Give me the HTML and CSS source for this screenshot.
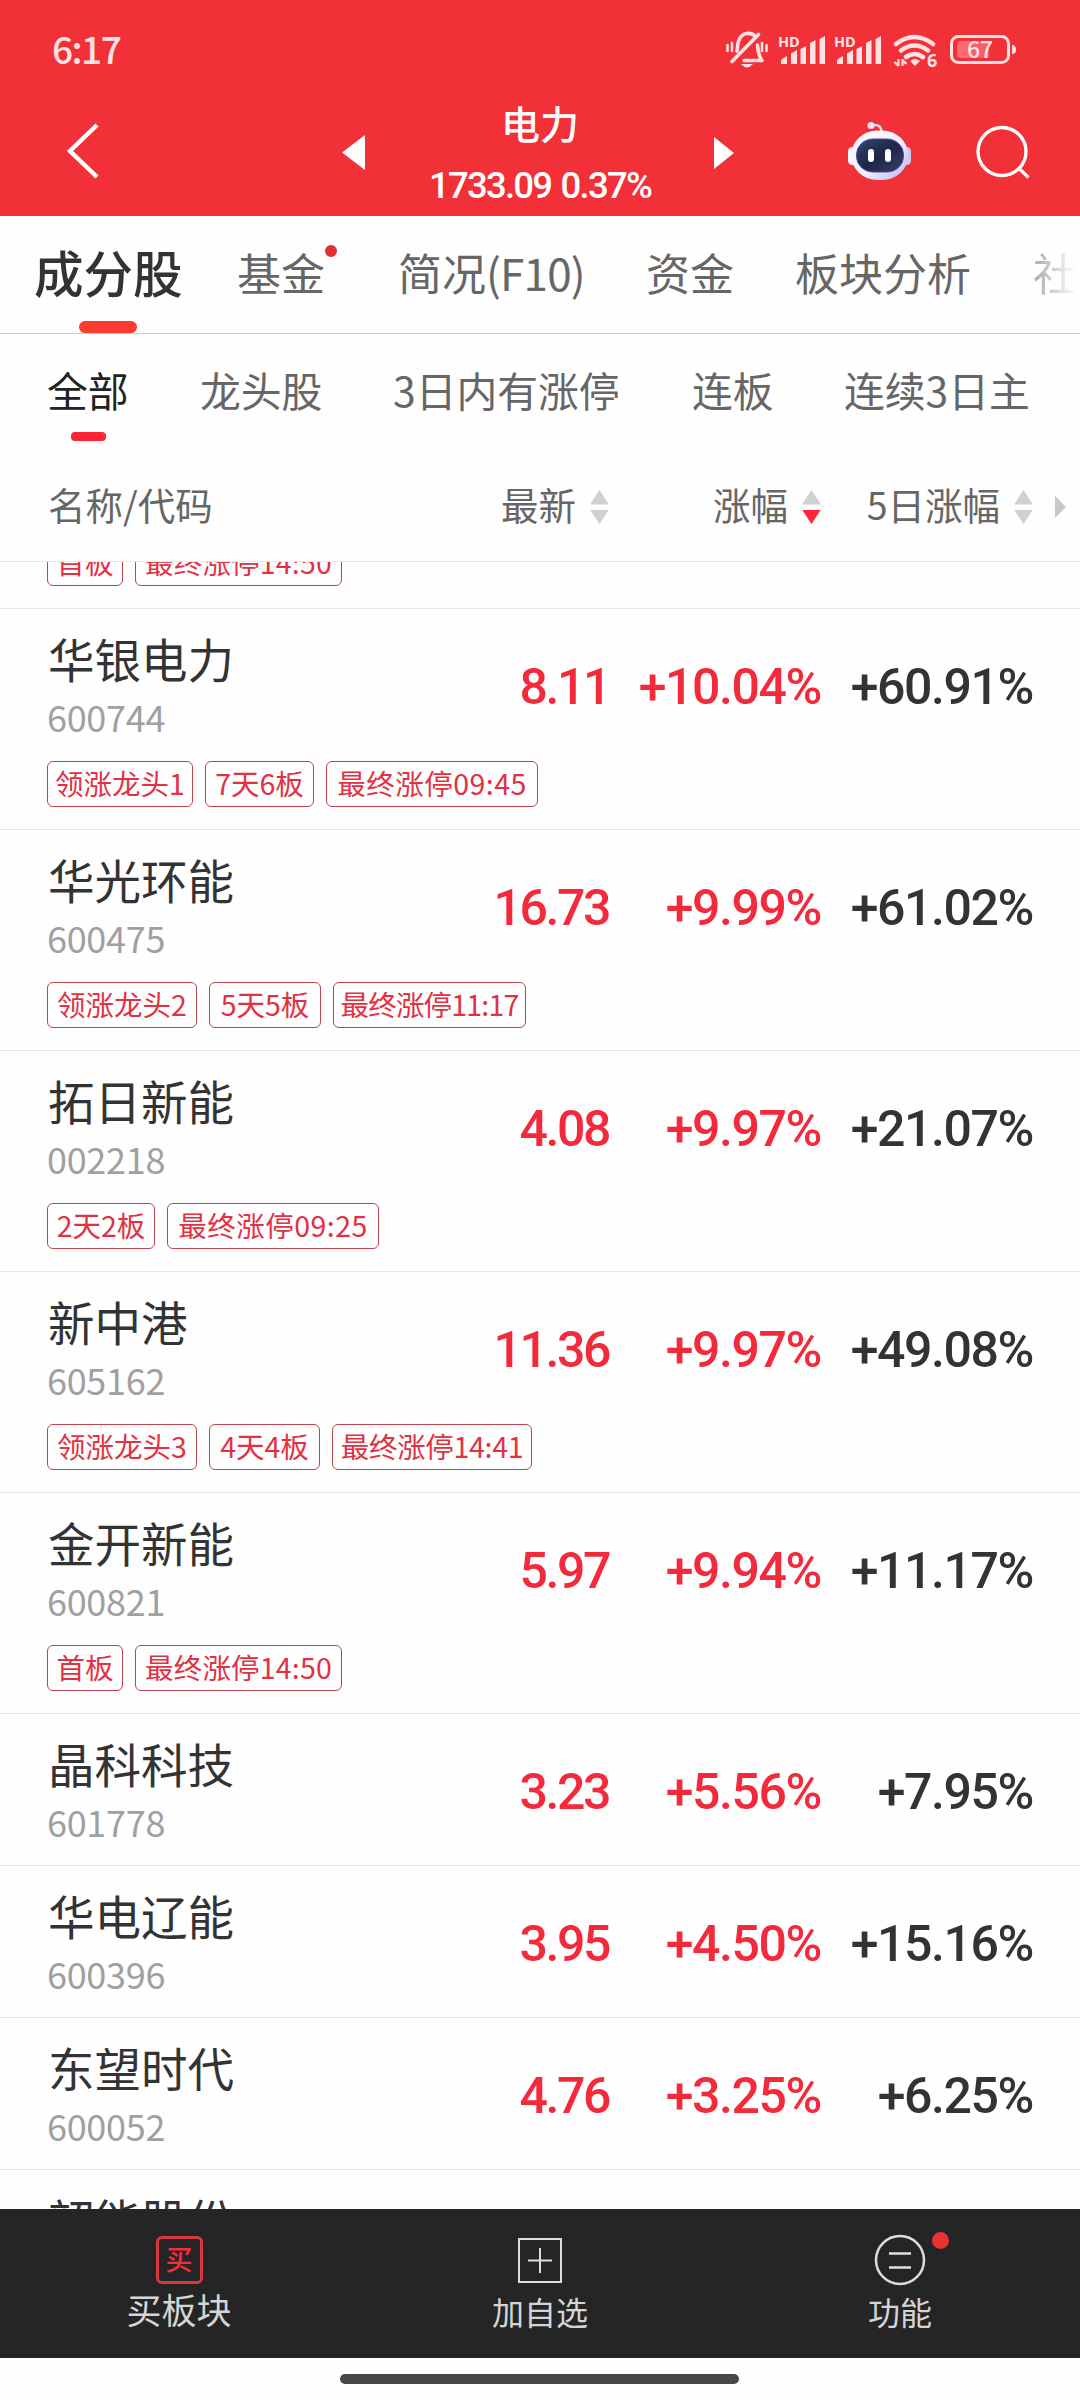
FILE: index.html
```html
<!DOCTYPE html>
<html lang="zh-CN">
<head>
<meta charset="utf-8">
<title>电力</title>
<link rel="stylesheet" href="styles.css">
</head>
<body>
<div class="screen">
  <header class="top">
    <div class="status">
      <span class="time">6:17</span>
      <svg class="status-icons" width="300" height="44" viewBox="720 28 300 44" fill="none" stroke="#ffe1e3">
        <g stroke-width="3.600" stroke-linecap="round" stroke-linejoin="round">
          <path d="M758.500 34.500 732 61.500M737 51C738 47 737 44 739 40 742 32 751 32 755 36M757.500 45C758 51 758 55 762 60.500H744" />
          <path d="M727.500 45v6M732 43v8M762 43v8M766.500 45v6" stroke-width="2.500"/>
        </g>
        <path d="M741 64h12q-6 7-12 0z" fill="#ffe1e3" stroke="none"/>
        <g id="sig" fill="#ffe1e3" stroke="none">
          <path d="M781 64v-3q0-1 1-2l5-3v8zM791 64V54q0-1 1-1l5-3v14zM800.500 64V49l5.500-3v18zM810 64V43l5.500-3v24zM819.500 64V39l5.500-3v28z"/>
          <text x="778" y="46.500" class="hd">HD</text>
        </g>
        <use href="#sig" x="56"/>
        <g stroke-width="4.600" stroke-linecap="round"><path d="M896 44q18.500-14 37 0M901 50.500q13.500-10 27 0M906 57q8.500-6 17 0"/></g>
        <path d="M910 61q5-4 10 0l-5 5z" fill="#ffe1e3" stroke="none"/>
        <path d="M898.500 66V59M902.500 59v7M894.500 62 898.500 66M902.500 60l4 4" stroke-width="2.200"/>
        <text x="927" y="67" class="six">6</text>
        <rect x="951.500" y="36.500" width="57" height="26" rx="7" stroke-width="3"/>
        <path d="M957 45q0-4 4-4h10v17h-10q-4 0-4-4z" fill="#ff696f" stroke="none"/>
        <rect x="971" y="41" width="18" height="17" fill="#f65f66" stroke="none"/>
        <path d="M1012 45q4 0 4 4.500t-4 4.500z" fill="#ffe1e3" stroke="none"/>
        <text x="980" y="58" text-anchor="middle" class="bat">67</text>
      </svg>
    </div>
    <div class="nav">
      <svg class="back" width="34" height="60" viewBox="66 121 34 60" fill="none" stroke="#fff" stroke-width="4.500"><path d="M97 125 70 151l27 26"/></svg>
      <svg class="tri" width="24" height="36" viewBox="0 0 24 36"><path d="M23 0v35L0 17.500z" fill="#fff"/></svg>
      <div class="heading">
        <h1>电力</h1>
        <p>1733.09 0.37%</p>
      </div>
      <svg class="tri right" width="24" height="36" viewBox="0 0 24 36"><path d="M2 2v32L22 18z" fill="#fff"/></svg>
      <svg class="robot" width="64" height="60" viewBox="848 121 64 60">
        <defs><linearGradient id="shell" x1="0" y1="0" x2="1" y2="1"><stop offset="0" stop-color="#fff"/><stop offset=".55" stop-color="#f1effc"/><stop offset="1" stop-color="#b9b3ea"/></linearGradient>
        <linearGradient id="face" x1="0" y1="0" x2="1" y2="1"><stop offset="0" stop-color="#33476f"/><stop offset=".5" stop-color="#1d2647"/><stop offset="1" stop-color="#3a3f62"/></linearGradient></defs>
        <circle cx="871" cy="125.500" r="3.600" fill="#ebe4f8"/>
        <path d="M872 125.500q9-2 9.500 6" fill="none" stroke="#e6dcf5" stroke-width="2.400"/>
        <rect x="848" y="147" width="9" height="18" rx="4.500" fill="#f6f4fd"/>
        <rect x="902.500" y="147" width="8.500" height="18" rx="4.200" fill="#cfc9f1"/>
        <rect x="851.500" y="130.500" width="56.500" height="49.500" rx="26" ry="24" fill="url(#shell)"/>
        <rect x="856.500" y="139" width="47" height="33" rx="17" ry="15.500" fill="url(#face)" stroke="#4a3fc4" stroke-width="1"/>
        <rect x="868" y="149" width="6" height="13" rx="3" fill="#fff"/>
        <rect x="885" y="149" width="6" height="13" rx="3" fill="#fff"/>
      </svg>
      <svg class="search" width="56" height="56" viewBox="974 125 56 56" fill="none" stroke="#fff" stroke-width="3.300"><circle cx="1001" cy="151.500" r="24"/><path d="M1018 168.500l9.500 9"/></svg>
    </div>
  </header>

  <nav class="tabs">
    <span class="tab active">成分股</span>
    <span class="tab dot">基金</span>
    <span class="tab">简况<span class="latin">(F10)</span></span>
    <span class="tab">资金</span>
    <span class="tab">板块分析</span>
    <span class="tab fade">社</span>
  </nav>
  <nav class="filters">
    <span class="filter active">全部</span>
    <span class="filter">龙头股</span>
    <span class="filter">3日内有涨停</span>
    <span class="filter">连板</span>
    <span class="filter">连续3日主</span>
  </nav>
  <div class="columns">
    <span class="col-name">名称/代码</span>
    <span class="col">最新<i class="sort"></i></span>
    <span class="col">涨幅<i class="sort desc"></i></span>
    <span class="col">5日涨幅<i class="sort"></i></span>
    <i class="more"></i>
  </div>

  <main class="list">
    <div class="cut"><div class="tags"><b class="tag first">首板</b><b class="tag time-tag">最终涨停14:50</b></div></div>

    <section class="row">
      <div class="main"><div><h2>华银电力</h2><p class="code">600744</p></div><span class="num up price">8.11</span><span class="num up">+10.04%</span><span class="num">+60.91%</span></div>
      <div class="tags"><b class="tag lead">领涨龙头1</b><b class="tag days">7天6板</b><b class="tag time-tag wide">最终涨停09:45</b></div>
    </section>
    <section class="row">
      <div class="main"><div><h2>华光环能</h2><p class="code">600475</p></div><span class="num up price">16.73</span><span class="num up">+9.99%</span><span class="num">+61.02%</span></div>
      <div class="tags"><b class="tag lead wide">领涨龙头2</b><b class="tag days wide">5天5板</b><b class="tag time-tag narrow">最终涨停11:17</b></div>
    </section>
    <section class="row">
      <div class="main"><div><h2>拓日新能</h2><p class="code">002218</p></div><span class="num up price">4.08</span><span class="num up">+9.97%</span><span class="num">+21.07%</span></div>
      <div class="tags"><b class="tag days slim">2天2板</b><b class="tag time-tag wide">最终涨停09:25</b></div>
    </section>
    <section class="row">
      <div class="main"><div><h2>新中港</h2><p class="code">605162</p></div><span class="num up price">11.36</span><span class="num up">+9.97%</span><span class="num">+49.08%</span></div>
      <div class="tags"><b class="tag lead wide">领涨龙头3</b><b class="tag days mid">4天4板</b><b class="tag time-tag mid">最终涨停14:41</b></div>
    </section>
    <section class="row">
      <div class="main"><div><h2>金开新能</h2><p class="code">600821</p></div><span class="num up price">5.97</span><span class="num up">+9.94%</span><span class="num">+11.17%</span></div>
      <div class="tags"><b class="tag first">首板</b><b class="tag time-tag">最终涨停14:50</b></div>
    </section>
    <section class="row">
      <div class="main"><div><h2>晶科科技</h2><p class="code">601778</p></div><span class="num up price">3.23</span><span class="num up">+5.56%</span><span class="num">+7.95%</span></div>
    </section>
    <section class="row">
      <div class="main"><div><h2>华电辽能</h2><p class="code">600396</p></div><span class="num up price">3.95</span><span class="num up">+4.50%</span><span class="num">+15.16%</span></div>
    </section>
    <section class="row">
      <div class="main"><div><h2>东望时代</h2><p class="code">600052</p></div><span class="num up price">4.76</span><span class="num up">+3.25%</span><span class="num">+6.25%</span></div>
    </section>
    <section class="row">
      <div class="main"><div><h2>韶能股份</h2></div></div>
    </section>
  </main>

  <footer class="bar">
    <div class="action buy"><span class="buy-icon">买</span><span>买板块</span></div>
    <div class="action">
      <svg width="52" height="52" viewBox="0 0 52 52" fill="none" stroke="#ddd" stroke-width="2"><path d="M5 5h42v43H5zM26 14v25M14 26.500h24"/></svg>
      <span>加自选</span>
    </div>
    <div class="action">
      <svg width="52" height="52" viewBox="0 0 52 52" fill="none" stroke="#ddd" stroke-width="2.500"><circle cx="26" cy="26" r="24"/><path d="M15 19.500h22M15 33.500h22"/></svg>
      <span>功能</span>
      <i class="badge"></i>
    </div>
  </footer>
  <div class="home"><i></i></div>
</div>
</body>
</html>
```
FILE: styles.css
```css
* { box-sizing: border-box; margin: 0; padding: 0; }
body { background: #fefefe; font-family: "Noto Sans CJK SC", sans-serif; color: #333; }
i { font-style: normal; }
.screen { width: 1080px; height: 2400px; overflow: hidden; display: flex; flex-direction: column; }
svg { display: block; overflow: visible; }

.top { height: 216px; background: #f23038; color: #fff; flex: none; }
.status { height: 100px; display: flex; justify-content: space-between; padding: 28px 60px 0 52px; }
.time { font-size: 37px; font-weight: 500; line-height: 40px; letter-spacing: -1.500px; color: #ffe1e3; }
.hd { font: 700 14.500px "Open Sans", sans-serif; }
.six { font: 700 18px "Open Sans", sans-serif; fill: #ffe1e3; stroke: none; }
.bat { font: 500 23px "Noto Sans CJK SC", sans-serif; fill: #ffe1e3; stroke: none; }
.nav { height: 116px; display: grid; grid-template-columns: 276px 80px 290px 136px 127px 56px; padding-left: 66px; }
.back { margin-top: 21px; }
.tri { margin-top: 35px; }
.heading { text-align: center; width: 360px; margin-left: -62px; }
.heading h1 { font-size: 39px; font-weight: 500; line-height: 44px; }
.heading p { font: 500 36.500px/40px Roboto, sans-serif; letter-spacing: -1.750px; word-spacing: 2px; margin-top: 22px; }
.robot { margin-top: 21px; }
.search { margin-top: 25px; }

.tabs { height: 118px; flex: none; border-bottom: 1px solid #c8c8c8; display: grid; grid-template-columns: 202px 161px 248px 149px 238px 48px; padding-left: 35px; line-height: 112px; font-size: 44px; color: #666; white-space: nowrap; }
.tab { position: relative; }
.tab.active { font-size: 49.500px; font-weight: 500; color: #333; margin-left: -1px; }
.tab.active::after { content: ""; position: absolute; left: 45px; top: 105px; width: 58px; height: 12px; border-radius: 6px; background: #fc3b30; }
.tab.dot::after { content: ""; position: absolute; left: 88px; top: 29px; width: 12px; height: 12px; border-radius: 50%; background: #e03030; }
.latin { letter-spacing: -.800px; }
.fade { background: linear-gradient(90deg, #aaa, #fefefe 44px); background-clip: text; color: transparent; }

.filters { height: 116px; flex: none; display: grid; grid-template-columns: 152px 193px 299px 152px 200px; padding-left: 48px; font-size: 40.800px; line-height: 112px; color: #666; white-space: nowrap; }
.filter { position: relative; }
.filter.active { color: #222; margin-left: -1px; }
.filter.active::after { content: ""; position: absolute; left: 24px; top: 98px; width: 35px; height: 9px; border-radius: 4px; background: #fc2538; }

.columns { height: 112px; flex: none; border-bottom: 1px solid #e8e8e8; display: grid; grid-template-columns: 300px 261px 212px 212px 47px; padding-left: 48px; font-size: 37.500px; line-height: 108px; color: #666; white-space: nowrap; }
.col { display: flex; justify-content: flex-end; gap: 14px; }
.sort { width: 19px; height: 34px; margin-top: 40px; display: grid; row-gap: 5px; }
.sort::before, .sort::after { content: ""; height: 14.500px; background: #d0d0d0; clip-path: polygon(50% 0, 100% 100%, 0 100%); }
.sort::after { clip-path: polygon(0 0, 100% 0, 50% 100%); }
.sort.desc::after { background: #fc2538; }
.more { width: 11px; height: 22px; margin: 46px 0 0 22px; background: #c8c8c8; clip-path: polygon(0 0, 100% 50%, 0 100%); }

.list { height: 1647px; flex: none; overflow: hidden; }
.cut { height: 47px; display: flex; align-items: flex-end; overflow: hidden; padding-bottom: 22px; border-bottom: 1px solid #e8e8e8; }
.row { border-bottom: 1px solid #e8e8e8; }
.main { height: 151px; display: grid; grid-template-columns: 300px 261px 212px 212px; padding-left: 48px; padding-top: 20px; }
.main h2 { font-size: 46.500px; font-weight: 400; line-height: 58px; white-space: nowrap; }
.code { font-size: 36px; line-height: 40px; margin: 9px 0 0 -1px; letter-spacing: -.300px; color: #a0a0a0; }
.num { font: 500 50px/60px Roboto, sans-serif; letter-spacing: -1.400px; text-align: right; margin-top: 28px; }
.price { letter-spacing: -2.400px; }
.up { color: #f22a3c; }
.tags { display: flex; gap: 12px; padding-left: 47px; }
.row .tags { padding-top: 1px; padding-bottom: 22px; }
.tag { height: 46px; border: 1px solid #b8454f; border-radius: 6px; color: #e23142; font-size: 28.500px; font-weight: 400; line-height: 41px; text-align: center; white-space: nowrap; }
.first { width: 76px; }
.lead { width: 146px; }
.lead.wide { width: 150px; }
.days { width: 109px; }
.days.slim { width: 108px; }
.days.mid { width: 111px; }
.days.wide { width: 112px; }
.time-tag { width: 207px; letter-spacing: .200px; }
.time-tag.wide { width: 212px; letter-spacing: .500px; }
.time-tag.mid { width: 200px; letter-spacing: -.300px; }
.time-tag.narrow { width: 193px; letter-spacing: -.800px; }

.bar { height: 149px; flex: none; background: #252525; color: #d5d5d5; display: grid; grid-template-columns: repeat(3, 1fr); }
.action { position: relative; display: flex; flex-direction: column; align-items: center; padding-top: 25px; font-size: 32px; line-height: 44px; }
.action span:last-of-type { margin-top: 3px; }
.buy { font-size: 35px; padding-right: 2px; }
.buy-icon { width: 47px; height: 48px; margin: 2px 0; border: 3px solid #d8383f; border-radius: 6px; color: #fb2b3c; font-size: 27px; font-weight: 500; line-height: 39px; text-align: center; }
.buy span:last-of-type { margin-top: 1px; }
.badge { position: absolute; left: 212px; top: 23px; width: 17px; height: 17px; border-radius: 50%; background: #e93333; }
.home { height: 42px; padding: 16px 0 0 340px; background: #fefefe; }
.home i { display: block; width: 399px; height: 10px; border-radius: 5px; background: #474747; }
```
